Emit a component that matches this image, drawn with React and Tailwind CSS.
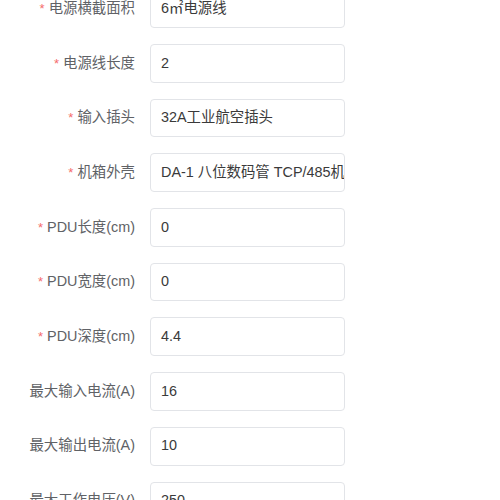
const fields = [
  { label: '电源横截面积', value: '6㎡电源线', required: true },
  { label: '电源线长度', value: '2', required: true },
  { label: '输入插头', value: '32A工业航空插头', required: true },
  { label: '机箱外壳', value: 'DA-1 八位数码管 TCP/485机箱', required: true },
  { label: 'PDU长度(cm)', value: '0', required: true },
  { label: 'PDU宽度(cm)', value: '0', required: true },
  { label: 'PDU深度(cm)', value: '4.4', required: true },
  { label: '最大输入电流(A)', value: '16' },
  { label: '最大输出电流(A)', value: '10' },
  { label: '最大工作电压(V)', value: '250' },
];

const FormRow = ({ label, value, required }) => (
  <div className="flex items-center h-[38.7px] mb-[16px]">
    <label className="w-[135px] shrink-0 text-right text-[14.4px] text-[#606266] whitespace-nowrap">
      {required && <span className="text-[#f56c6c] mr-[4px] text-[13px]">*</span>}
      {label}
    </label>
    <div className="ml-[15px] w-[195px] h-full border border-[#e2e4e8] rounded-[4px] bg-white flex items-center px-[10px] overflow-hidden">
      <span className="text-[14.4px] text-[#3a3a3a] whitespace-nowrap">{value}</span>
    </div>
  </div>
);

export default function App() {
  return (
    <div
      className="w-[500px] h-[500px] overflow-hidden bg-white"
      style={{ fontFamily: '"Liberation Sans", Arial, "Noto Sans CJK SC", sans-serif' }}
    >
      <form className="flex flex-col mt-[-10.7px]">
        {fields.map((f) => (
          <FormRow key={f.label} {...f} />
        ))}
      </form>
    </div>
  );
}
